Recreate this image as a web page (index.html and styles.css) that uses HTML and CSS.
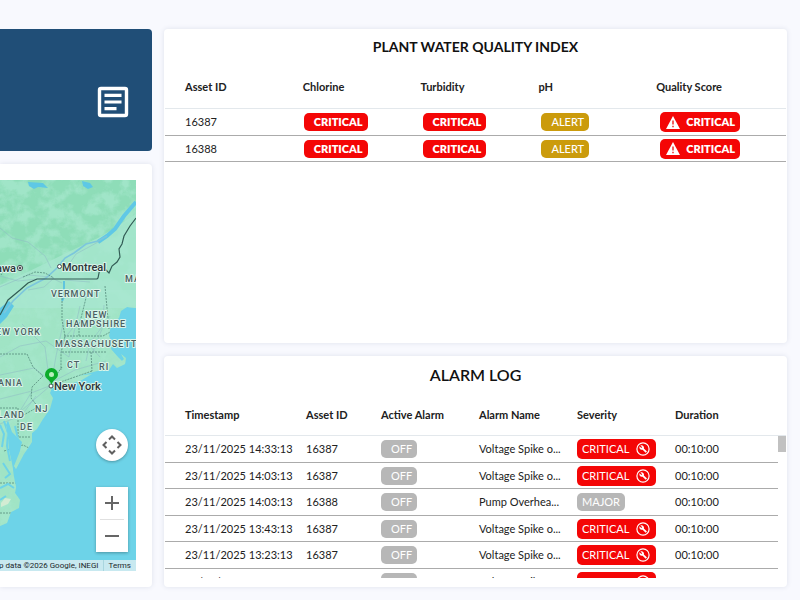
FILE: index.html
```html
<!DOCTYPE html>
<html lang="en">
<head>
<meta charset="utf-8">
<title>Plant Water Quality</title>
<link rel="stylesheet" href="styles.css">
</head>
<body>
<main class="dashboard">
  <div class="column">
    <section class="summary" aria-label="Summary">
      <svg class="summary-icon" viewBox="0 0 32 32" aria-hidden="true">
        <rect x="2.500" y="2.500" width="27" height="27" rx="1.500" fill="none" stroke="#fff" stroke-width="3.400"/>
        <path d="M7.500 9.300h17M7.500 16h17M7.500 22.700h12" stroke="#fff" stroke-width="3.200"/>
      </svg>
    </section>
    <section class="card map-card" aria-label="Plant map">
      <div class="map">
        <svg class="map-canvas" viewBox="0 0 136 391" preserveAspectRatio="xMaxYMin slice">
          <defs>
            <filter id="terrain" x="0" y="0" width="100%" height="100%" color-interpolation-filters="sRGB">
              <feTurbulence type="fractalNoise" baseFrequency="0.07" numOctaves="5" seed="8"/>
              <feColorMatrix values="0 0 0 0 0.66  0 0 0 0 0.91  0 0 0 0 0.81  4 0 0 0 -1.6"/>
            </filter>
            <clipPath id="land">
              <path d="M0 0H136V128L127 127L121 131L119 138L112 143L110 150L109 156L112 163L111 169L117 176L122 181L124 179L121 174L126 178L125 184L117 188L113 184L109 190L97 191L90 193L77 196L92 194L80 201L63 206L52 208L50 213L53 218L50 229L43 239L37 249L32 253L32 262L24 274L16 289L14 286L20 271L22 262L12 252L8 240L6 245L8 258L9 270L12 283L14 297L16 307L15 313L20 320L19 328L11 332L7 343L0 346Z"/>
            </clipPath>
          </defs>
          <rect width="136" height="391" fill="#6dd3e8"/>
          <g clip-path="url(#land)">
            <rect width="136" height="391" fill="#a0e4c5"/>
            <rect width="136" height="110" fill="#8eddb8"/>
            <rect width="136" height="120" filter="url(#terrain)" opacity=".7"/>
            <rect y="110" width="136" height="240" filter="url(#terrain)" opacity=".5"/>
            <path d="M0 105Q28 92 48 82T102 56L136 34V128H0Z" fill="#a8e7d0" opacity=".75"/>
            <path d="M0 143V128L9 121L14 126L7 137L0 144ZM82 1L90 3L93 7L88 9L83 6ZM28 2L43 3L48 8L38 7L34 9L29 6Z" fill="#5ec8e5"/>
            <path d="M136 22L124 36L115 49L107 56L98 62" fill="none" stroke="#60c8e6" stroke-width="4"/>
            <path d="M107 56L98 61L86 64L74 73L65 78L57 88L46 98L27 108L13 121L4 133" fill="none" stroke="#7cc6dc" stroke-width="1.600"/>
            <path d="M64 101V117L62 121" fill="none" stroke="#60c4df" stroke-width="2"/>
            <path d="M0 48L12 58L28 62L45 76L51 88M0 107L28 95L50 97L62 103M65 90L76 74L100 61M54 98L44 107L28 110M0 96L18 101L47 98M65 100L90 102M64 140L56 176L51 206M80 126L72 161L69 177M104 125L102 149L92 174M110 136L90 163L86 181M0 177L20 166L46 161L69 177M0 195L34 188L52 202L75 190L106 181M22 144L45 167L50 206L29 224L12 239M52 205L31 213L20 231M0 219L32 211M0 244L22 235L36 216M90 166L100 177M76 144L64 159" fill="none" stroke="#8fb9c6" stroke-width=".8" opacity=".65"/>
            <path d="M0 86L3 92L1 95M23 97L35 92L45 93L54 98M62 109V140L65 156L61 173V190M88 110L83 130L79 146V156M105 106L107 128L109 149M64 156H103L112 151M62 172H106M91 172L92 191M0 174H27L33 187L43 196L32 207L31 218L38 227L20 237M0 228H18V257H30M62 187L52 201M92 191L52 205M4 271L23 265L31 269M0 333L13 333M0 303H18" fill="none" stroke="#568c7c" stroke-width=".8" stroke-dasharray="2 1"/>
            <path d="M136 38L130 46L124 56L122 64L119 69L120 77L117 82L112 86L109 93L106 90L103 91L100 88L98 98L97 99H37L28 103L20 110L8 120L0 135" fill="none" stroke="#325c55" stroke-width="1.200"/>
            <path d="M4 241L8 253L7 266L10 281M0 245L4 254L2 267M3 283L10 294L5 298M0 308L8 304L14 308M0 320L6 316M15 246L18 259" fill="none" stroke="#6dd3e8" stroke-width="2"/>
            <path d="M1 323L5 318L11 319L8 324L1 327Z" fill="#d3ecd3"/>
          </g>
          <g class="map-label region">
            <text x="51" y="117">VERMONT</text>
            <text x="125" y="102">MA</text>
            <text x="85" y="138">NEW</text>
            <text x="66" y="147">HAMPSHIRE</text>
            <text x="41" y="155" text-anchor="end">NEW YORK</text>
            <text x="55" y="167">MASSACHUSETTS</text>
            <text x="67" y="188">CT</text>
            <text x="99" y="190">RI</text>
            <text x="23" y="206" text-anchor="end">PENNSYLVANIA</text>
            <text x="35" y="232">NJ</text>
            <text x="25" y="238" text-anchor="end">MARYLAND</text>
            <text x="20" y="250">DE</text>
          </g>
          <g class="map-label city">
            <text x="16" y="92" text-anchor="end">Ottawa</text>
            <text x="62" y="91">Montreal</text>
            <text x="54" y="210">New York</text>
          </g>
          <g fill="#fff" stroke="#454b50">
            <circle cx="20" cy="88" r="2.600"/><circle cx="20" cy="88" r="1" fill="#454b50"/>
            <circle cx="59.500" cy="86.500" r="2"/><circle cx="51" cy="206" r="2"/>
          </g>
          <path d="M51.500 205C50 199 45 199 45 194.500A6.500 6.500 0 0 1 58 194.500C58 199 53 199 51.500 205Z" fill="#0cac2b"/>
          <circle cx="51.500" cy="194.500" r="2.500" fill="#b9efbd"/>
        </svg>
        <button class="map-button pan" aria-label="Map camera controls">
          <svg viewBox="0 0 20 20" aria-hidden="true"><path d="M7 4.500L10 1.500L13 4.500M7 15.500L10 18.500L13 15.500M4.500 7L1.500 10L4.500 13M15.500 7L18.500 10L15.500 13" fill="none" stroke="#606060" stroke-width="2"/></svg>
        </button>
        <div class="zoom">
          <button class="map-button" aria-label="Zoom in"><svg viewBox="0 0 14 14" aria-hidden="true"><path d="M7 0V14M0 7H14" stroke="#666" stroke-width="2"/></svg></button>
          <hr>
          <button class="map-button" aria-label="Zoom out"><svg viewBox="0 0 14 14" aria-hidden="true"><path d="M0 7H14" stroke="#666" stroke-width="2"/></svg></button>
        </div>
        <div class="attribution"><span>Map data ©2026 Google, INEGI</span><a href="#terms">Terms</a></div>
      </div>
    </section>
  </div>

  <div class="column">
    <section class="card quality-card">
      <h2>PLANT WATER QUALITY INDEX</h2>
      <table class="quality">
        <thead><tr><th>Asset ID</th><th>Chlorine</th><th>Turbidity</th><th>pH</th><th>Quality Score</th></tr></thead>
        <tbody>
          <tr><td>16387</td><td><span class="badge red inset">CRITICAL</span></td><td><span class="badge red inset">CRITICAL</span></td><td><span class="badge amber inset">ALERT</span></td><td><span class="badge red tall score"><svg viewBox="0 0 14 13" aria-hidden="true"><path d="M7 0L14 13H0Z" fill="#fff"/><path d="M7 4.500V8.500M7 9.800V11.300" stroke="#e80b0b" stroke-width="1.300"/></svg>CRITICAL</span></td></tr>
          <tr><td>16388</td><td><span class="badge red inset">CRITICAL</span></td><td><span class="badge red inset">CRITICAL</span></td><td><span class="badge amber inset">ALERT</span></td><td><span class="badge red tall score"><svg viewBox="0 0 14 13" aria-hidden="true"><path d="M7 0L14 13H0Z" fill="#fff"/><path d="M7 4.500V8.500M7 9.800V11.300" stroke="#e80b0b" stroke-width="1.300"/></svg>CRITICAL</span></td></tr>
        </tbody>
      </table>
    </section>
    <section class="card alarm-card">
      <h2>ALARM LOG</h2>
      <svg class="symbols" aria-hidden="true"><symbol id="wrench" viewBox="0 0 14 14"><circle cx="7" cy="7" r="6.100" fill="none" stroke="#fff" stroke-width="1.200"/><path d="M3.500 4.200L5.300 6L6.200 5.200L4.400 3.400C6.200 2.600 8.600 4.200 7.900 6.500L11 9.500L9.700 10.800L6.600 7.700C4.600 8.500 2.700 6.200 3.500 4.200Z" fill="#fff"/></symbol></svg>
      <div class="log">
      <table class="alarms">
        <thead><tr><th>Timestamp</th><th>Asset ID</th><th>Active Alarm</th><th>Alarm Name</th><th>Severity</th><th>Duration</th></tr></thead>
        <tbody>
          <tr><td>23/11/2025 14:33:13</td><td>16387</td><td><span class="badge gray inset">OFF</span></td><td>Voltage Spike o...</td><td><span class="badge red tall severity">CRITICAL<svg aria-hidden="true"><use href="#wrench"/></svg></span></td><td>00:10:00</td></tr>
          <tr><td>23/11/2025 14:03:13</td><td>16387</td><td><span class="badge gray inset">OFF</span></td><td>Voltage Spike o...</td><td><span class="badge red tall severity">CRITICAL<svg aria-hidden="true"><use href="#wrench"/></svg></span></td><td>00:10:00</td></tr>
          <tr><td>23/11/2025 14:03:13</td><td>16388</td><td><span class="badge gray inset">OFF</span></td><td>Pump Overhea...</td><td><span class="badge gray">MAJOR</span></td><td>00:10:00</td></tr>
          <tr><td>23/11/2025 13:43:13</td><td>16387</td><td><span class="badge gray inset">OFF</span></td><td>Voltage Spike o...</td><td><span class="badge red tall severity">CRITICAL<svg aria-hidden="true"><use href="#wrench"/></svg></span></td><td>00:10:00</td></tr>
          <tr><td>23/11/2025 13:23:13</td><td>16387</td><td><span class="badge gray inset">OFF</span></td><td>Voltage Spike o...</td><td><span class="badge red tall severity">CRITICAL<svg aria-hidden="true"><use href="#wrench"/></svg></span></td><td>00:10:00</td></tr>
          <tr><td>23/11/2025 13:03:13</td><td>16387</td><td><span class="badge gray inset">OFF</span></td><td>Voltage Spike o...</td><td><span class="badge red tall severity">CRITICAL<svg aria-hidden="true"><use href="#wrench"/></svg></span></td><td>00:10:00</td></tr>
        </tbody>
      </table>
      <div class="scroll-thumb"></div>
      </div>
    </section>
  </div>
</main>
</body>
</html>
```
FILE: styles.css
```css
* { box-sizing: border-box; }
body {
  margin: 0;
  background: #f8f9fe;
  color: #212121;
  font: 12px/16px Lato, "Liberation Sans", sans-serif;
}
.dashboard {
  display: grid;
  grid-template-columns: 152fr 623fr;
  gap: 12px;
  min-height: 100vh;
  padding: 29px 13px 13px 0;
}
.column { display: flex; flex-direction: column; gap: 13px; min-width: 0; }
.card {
  background: #fff;
  border-radius: 4px;
  box-shadow: 0 0 5px rgba(70, 85, 130, .14);
}
.summary {
  display: flex;
  align-items: center;
  justify-content: flex-end;
  height: 122px;
  padding: 24px 23px 0 0;
  background: #204e77;
  border-radius: 0 4px 4px 0;
}
.summary-icon { width: 32px; height: 32px; }
.map-card {
  flex: 1;
  display: flex;
  padding: 16px 16px 16px 0;
  border-radius: 0 4px 4px 0;
}
.map { position: relative; flex: 1; overflow: hidden; }
.map-canvas { position: absolute; width: 100%; height: 100%; }
.map-label {
  font-family: Roboto, sans-serif;
  stroke: #d9f4ea;
  stroke-width: 2px;
  stroke-linejoin: round;
  paint-order: stroke;
}
.region { font-size: 9px; font-weight: 500; letter-spacing: 1px; fill: #4a5e60; }
.city { font-size: 11px; font-weight: 500; fill: #2c3438; }
.map-button {
  display: grid;
  place-items: center;
  width: 32px;
  height: 32px;
  padding: 0;
  border: 0;
  background: #fff;
}
.map-button svg { width: 14px; height: 14px; }
.pan {
  position: absolute;
  right: 8px;
  bottom: 110px;
  border-radius: 50%;
  box-shadow: 0 1px 3px rgba(0, 0, 0, .3);
}
.pan svg { width: 20px; height: 20px; }
.zoom {
  position: absolute;
  right: 8px;
  bottom: 19px;
  background: #fff;
  box-shadow: 0 1px 3px rgba(0, 0, 0, .3);
}
.zoom hr { height: 1px; margin: 0 4px; border: 0; background: #e0e0e0; }
.attribution {
  position: absolute;
  right: 0;
  bottom: 0;
  display: flex;
  height: 11px;
  background: #c8e9f0;
  color: #20282b;
  font: 8px/11px Roboto, sans-serif;
  white-space: nowrap;
}
.attribution a { margin-left: 4px; padding: 0 5px; border-left: 1px solid #a9d6df; color: inherit; text-decoration: none; }

h2 { margin: 0; color: #111; font-size: 16px; font-weight: 600; line-height: 20px; text-align: center; }
.quality-card h2 { font-size: 14px; font-weight: 700; }
.quality-card { flex: 1; padding: 8px 1px 0; }
.alarm-card { padding: 9px 1px 9px; }
.symbols { display: none; }
table, thead, tbody { display: block; }
tr { display: grid; align-items: center; padding-left: 20px; }
th { padding: 0; font-size: 11px; font-weight: 700; text-align: left; }
td { padding: 0; font-size: 11px; white-space: nowrap; }
thead tr { padding-top: 9px; border-bottom: 1px solid #e3e8ec; }
tbody tr { height: 26px; border-bottom: 1px solid #ababab; }
tbody tr:nth-child(odd) { height: 27px; }
.quality tr { grid-template-columns: repeat(5, 1fr); }
.quality thead tr { height: 52px; padding-right: 12px; }
.quality tbody tr { padding-right: 7px; }
.log { position: relative; }
.alarms tr { grid-template-columns: 121fr 75fr 98fr 98fr 98fr 103fr; }
.alarms thead tr { height: 51px; padding-right: 8px; }
.alarms tbody { height: 142px; margin-right: 8px; overflow: hidden; }
.scroll-thumb { position: absolute; top: 51px; right: 0; width: 8px; height: 16px; background: #c1c1c1; }

.badge {
  display: inline-flex;
  align-items: center;
  height: 18px;
  padding: 0 5px;
  border-radius: 5px;
  color: #fff;
  vertical-align: middle;
}
.inset { padding-left: 10px; }
.red { background: #f40606; }
.amber { background: #cb9b0c; }
.gray { background: #b7b7b7; }
.tall { height: 20px; }
.quality .badge { font-weight: 800; }
.quality .amber { font-weight: 500; }
.score { gap: 6px; padding-left: 6px; }
.score svg { width: 14px; height: 13px; }
.severity { gap: 7px; padding-right: 6px; }
.severity svg { width: 14px; height: 14px; }
```
